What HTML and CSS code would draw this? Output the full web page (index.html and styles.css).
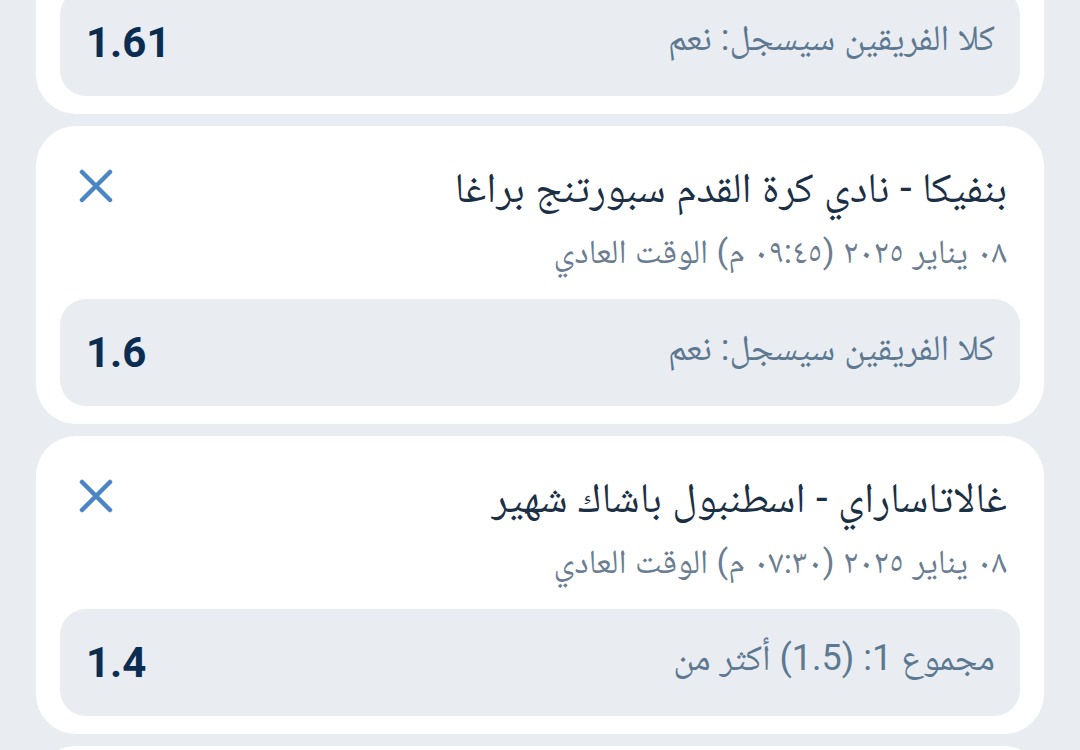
FILE: index.html
```html
<!DOCTYPE html>
<html lang="ar" dir="rtl">
<head>
    <meta charset="utf-8">
    <link rel="stylesheet" href="styles.css">
</head>
<body>
    <div class="bets">
        <div class="card">
            <div class="card-head">
                <div class="match">
                    <div class="teams">ريال مدريد - برشلونة</div>
                    <div class="date">٠٨ يناير ٢٠٢٥ (١٠:٠٠ م) الوقت العادي</div>
                </div>
                <button class="remove" aria-label="حذف">
                    <svg viewBox="0 0 34 34" width="34" height="34"><path d="M3 3L31 31M31 3L3 31"/></svg>
                </button>
            </div>
            <div class="outcome">
                <span class="market">كلا الفريقين سيسجل: نعم</span>
                <span class="odds">1.61</span>
            </div>
        </div>
        <div class="card">
            <div class="card-head">
                <div class="match">
                    <div class="teams">بنفيكا - نادي كرة القدم سبورتنج براغا</div>
                    <div class="date">٠٨ يناير ٢٠٢٥ (٠٩:٤٥ م) الوقت العادي</div>
                </div>
                <button class="remove" aria-label="حذف">
                    <svg viewBox="0 0 34 34" width="34" height="34"><path d="M3 3L31 31M31 3L3 31"/></svg>
                </button>
            </div>
            <div class="outcome">
                <span class="market">كلا الفريقين سيسجل: نعم</span>
                <span class="odds">1.6</span>
            </div>
        </div>
        <div class="card">
            <div class="card-head">
                <div class="match">
                    <div class="teams">غالاتاساراي - اسطنبول باشاك شهير</div>
                    <div class="date">٠٨ يناير ٢٠٢٥ (٠٧:٣٠ م) الوقت العادي</div>
                </div>
                <button class="remove" aria-label="حذف">
                    <svg viewBox="0 0 34 34" width="34" height="34"><path d="M3 3L31 31M31 3L3 31"/></svg>
                </button>
            </div>
            <div class="outcome">
                <span class="market">مجموع 1: (1.5) أكثر من</span>
                <span class="odds">1.4</span>
            </div>
        </div>
        <div class="card">
            <div class="card-head">
                <div class="match">
                    <div class="teams">ليفربول - مانشستر يونايتد</div>
                    <div class="date">٠٩ يناير ٢٠٢٥ (٠٨:٠٠ م) الوقت العادي</div>
                </div>
                <button class="remove" aria-label="حذف">
                    <svg viewBox="0 0 34 34" width="34" height="34"><path d="M3 3L31 31M31 3L3 31"/></svg>
                </button>
            </div>
            <div class="outcome">
                <span class="market">الفوز: 1</span>
                <span class="odds">1.85</span>
            </div>
        </div>
    </div>
</body>
</html>
```

FILE: styles.css
```css
body {
    margin: 0;
    background-color: #e9edf2;
    font-family: Roboto, "Noto Naskh Arabic", "Noto Sans Arabic", "DejaVu Sans", sans-serif;
    overflow: hidden;
}
.bets {
    display: flex;
    flex-direction: column;
    gap: 12px;
    padding: 0 36px;
    margin-top: -184px;
}
.card {
    background-color: #fff;
    border-radius: 40px;
    padding: 0 24px 18px;
}
.card-head {
    display: flex;
    justify-content: space-between;
    align-items: flex-start;
    height: 173px;
    padding: 0 13px 0 19px;
    box-sizing: border-box;
}
.match {
    padding-top: 39px;
}
.teams {
    font-size: 42px;
    line-height: 46px;
    color: #1b2f45;
}
.date {
    font-size: 34px;
    line-height: 40px;
    margin-top: 20px;
    color: #6a7d91;
}
.remove {
    border: none;
    background: none;
    padding: 0;
    margin-top: 43px;
    width: 34px;
    height: 34px;
    cursor: pointer;
}
.remove svg {
    display: block;
    fill: none;
    stroke: #4a86c6;
    stroke-width: 4.5;
    stroke-linecap: round;
}
.outcome {
    display: flex;
    justify-content: space-between;
    align-items: center;
    height: 107px;
    padding: 0 25px 0 26px;
    background-color: #e9edf2;
    border-radius: 26px;
}
.market {
    font-size: 36px;
    color: #5d7891;
}
.odds {
    font-size: 42px;
    font-weight: 700;
    color: #0c2d52;
}
```
